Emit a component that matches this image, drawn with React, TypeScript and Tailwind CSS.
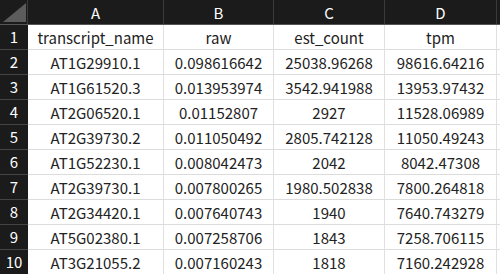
const cols = ["A", "B", "C", "D"];

const rows: string[][] = [
  ["transcript_name", "raw", "est_count", "tpm"],
  ["AT1G29910.1", "0.098616642", "25038.96268", "98616.64216"],
  ["AT1G61520.3", "0.013953974", "3542.941988", "13953.97432"],
  ["AT2G06520.1", "0.01152807", "2927", "11528.06989"],
  ["AT2G39730.2", "0.011050492", "2805.742128", "11050.49243"],
  ["AT1G52230.1", "0.008042473", "2042", "8042.47308"],
  ["AT2G39730.1", "0.007800265", "1980.502838", "7800.264818"],
  ["AT2G34420.1", "0.007640743", "1940", "7640.743279"],
  ["AT5G02380.1", "0.007258706", "1843", "7258.706115"],
  ["AT3G21055.2", "0.007160243", "1818", "7160.242928"],
];

const grid = "grid grid-cols-[28px_136px_110px_111px_112px_1fr]";

export default function App() {
  return (
    <div
      className="w-[500px] h-[274px] overflow-hidden bg-white text-[15px]"
      style={{ fontFamily: '"Noto Sans CJK JP", "Noto Sans", sans-serif' }}
    >
      {/* column header */}
      <div className={`${grid} h-[25px] bg-[#1b1b1b] border-b border-[#555] text-white`}>
        <div className="relative border-r border-[#3a3a3a]">
          <div className="absolute left-[3px] top-[3px] w-[23px] h-[19px] bg-[#5c5c5c] [clip-path:polygon(100%_0,100%_100%,0_100%)]" />
        </div>
        {cols.map((c) => (
          <div key={c} className="flex items-center justify-center border-r border-[#3a3a3a] leading-none">
            {c}
          </div>
        ))}
        <div className="bg-[#1b1b1b]" />
      </div>

      {rows.map((r, i) => (
        <div key={i} className={`${grid} h-[25px] border-b border-[#dcdcdc] text-[#222]`}>
          <div className="flex items-center justify-center bg-[#1b1b1b] text-white border-b border-[#444] -mb-px">
            {i + 1}
          </div>
          {r.map((v, j) => (
            <div key={j} className="flex items-center justify-center border-r border-[#e0e0e0] whitespace-nowrap leading-none">
              {v}
            </div>
          ))}
          <div />
        </div>
      ))}
    </div>
  );
}
